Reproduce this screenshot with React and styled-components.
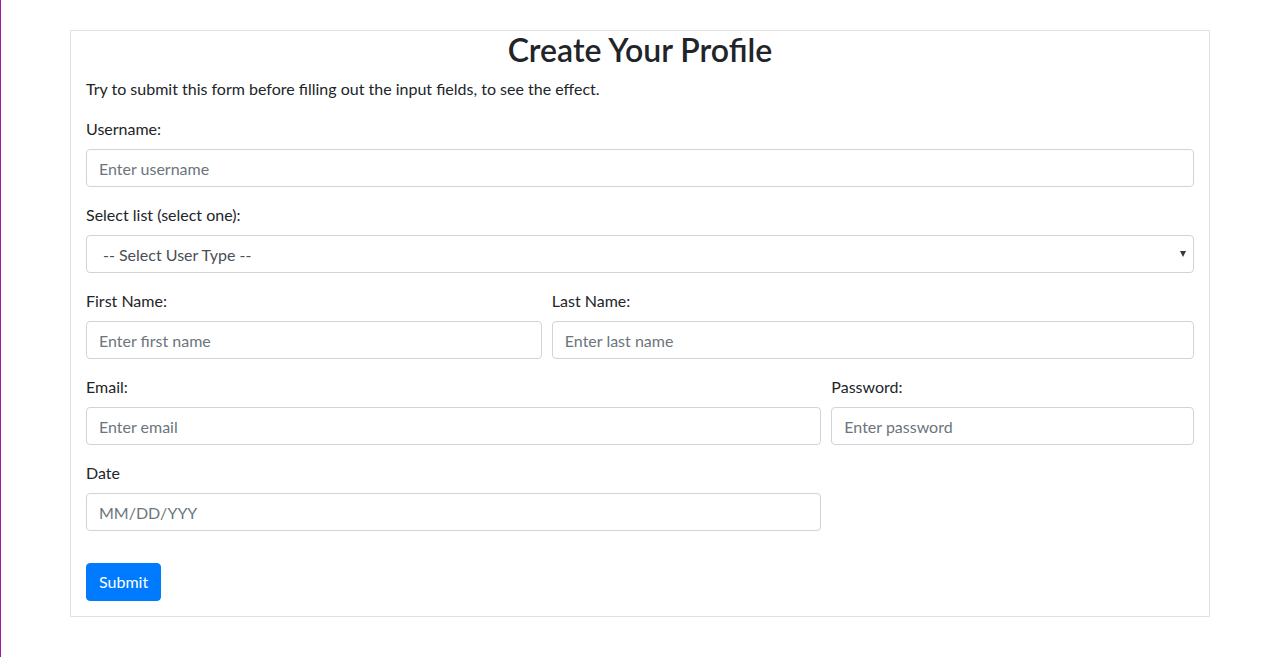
import React from 'react';
import styled, { createGlobalStyle } from 'styled-components';

const C = {
  text: '#212529',
  muted: '#6c757d',
  field: '#495057',
  border: '#ced4da',
  card: '#dee2e6',
  blue: '#007bff',
  magenta: '#a019a3',
};

const Global = createGlobalStyle`
  html, body {
    margin: 0;
    background: #fff;
  }
  body {
    min-height: 657px;
    border-left: 1px solid ${C.magenta};
    box-sizing: border-box;
    font-family: Lato, "Noto Sans", sans-serif;
    font-size: 16px;
    line-height: 1.5;
    color: ${C.text};
  }
  *, *::before, *::after { box-sizing: border-box; }
`;

const Page = styled.div`
  padding: 30px 0 0 69px;
`;

const Card = styled.form`
  width: 1140px;
  border: 1px solid ${C.card};
  padding: 0 15px 15px;
`;

const Title = styled.h2`
  margin: 0 0 8px;
  font-size: 32px;
  font-weight: 600;
  line-height: 1.2;
  text-align: center;
`;

const Intro = styled.p`
  margin: 0 0 16px;
`;

const Row = styled.div`
  display: flex;
  margin: 0 -5px;
`;

const Col = styled.div`
  flex: 0 0 ${p => (p.span / 12) * 100}%;
  padding: 0 5px;
`;

const Group = styled.div`
  margin-bottom: ${p => p.gap || 16}px;
`;

const Label = styled.label`
  display: block;
  margin-bottom: 8px;
`;

const Input = styled.input`
  display: block;
  width: 100%;
  height: 38px;
  padding: 6px 12px;
  font: inherit;
  color: ${C.field};
  background: #fff;
  border: 1px solid ${C.border};
  border-radius: 4px;
  outline: none;
  &::placeholder {
    color: ${C.muted};
    opacity: 1;
  }
`;

const SelectWrap = styled.div`
  position: relative;
  &::after {
    content: '';
    position: absolute;
    right: 8px;
    top: 16px;
    border-left: 3.5px solid transparent;
    border-right: 3.5px solid transparent;
    border-top: 6px solid #343a40;
    pointer-events: none;
  }
`;

const Select = styled.select`
  display: block;
  width: 100%;
  height: 38px;
  padding: 7px 24px 5px 16px;
  font: inherit;
  color: ${C.field};
  background: #fff;
  border: 1px solid ${C.border};
  border-radius: 4px;
  appearance: none;
  outline: none;
`;

const Button = styled.button`
  display: inline-block;
  height: 38px;
  padding: 6px 12px;
  font: inherit;
  color: #fff;
  background: ${C.blue};
  border: 1px solid ${C.blue};
  border-radius: 4px;
  cursor: pointer;
`;

function Field({ label, placeholder, type = 'text', gap }) {
  return (
    <Group gap={gap}>
      <Label>{label}</Label>
      <Input type={type} placeholder={placeholder} />
    </Group>
  );
}

export default function App() {
  return (
    <Page>
      <Global />
      <Card onSubmit={e => e.preventDefault()} noValidate>
        <Title>Create Your Profile</Title>
        <Intro>
          Try to submit this form before filling out the input fields, to see
          the effect.
        </Intro>
        <Field label="Username:" placeholder="Enter username" />
        <Group>
          <Label>Select list (select one):</Label>
          <SelectWrap>
            <Select defaultValue="">
              <option value="">-- Select User Type --</option>
              <option value="admin">Admin</option>
              <option value="user">User</option>
            </Select>
          </SelectWrap>
        </Group>
        <Row>
          <Col span={5}>
            <Field label="First Name:" placeholder="Enter first name" />
          </Col>
          <Col span={7}>
            <Field label="Last Name:" placeholder="Enter last name" />
          </Col>
        </Row>
        <Row>
          <Col span={8}>
            <Field label="Email:" placeholder="Enter email" type="email" />
          </Col>
          <Col span={4}>
            <Field label="Password:" placeholder="Enter password" type="password" />
          </Col>
        </Row>
        <Row>
          <Col span={8}>
            <Field label="Date" placeholder="MM/DD/YYY" gap={32} />
          </Col>
        </Row>
        <Button type="submit">Submit</Button>
      </Card>
    </Page>
  );
}
